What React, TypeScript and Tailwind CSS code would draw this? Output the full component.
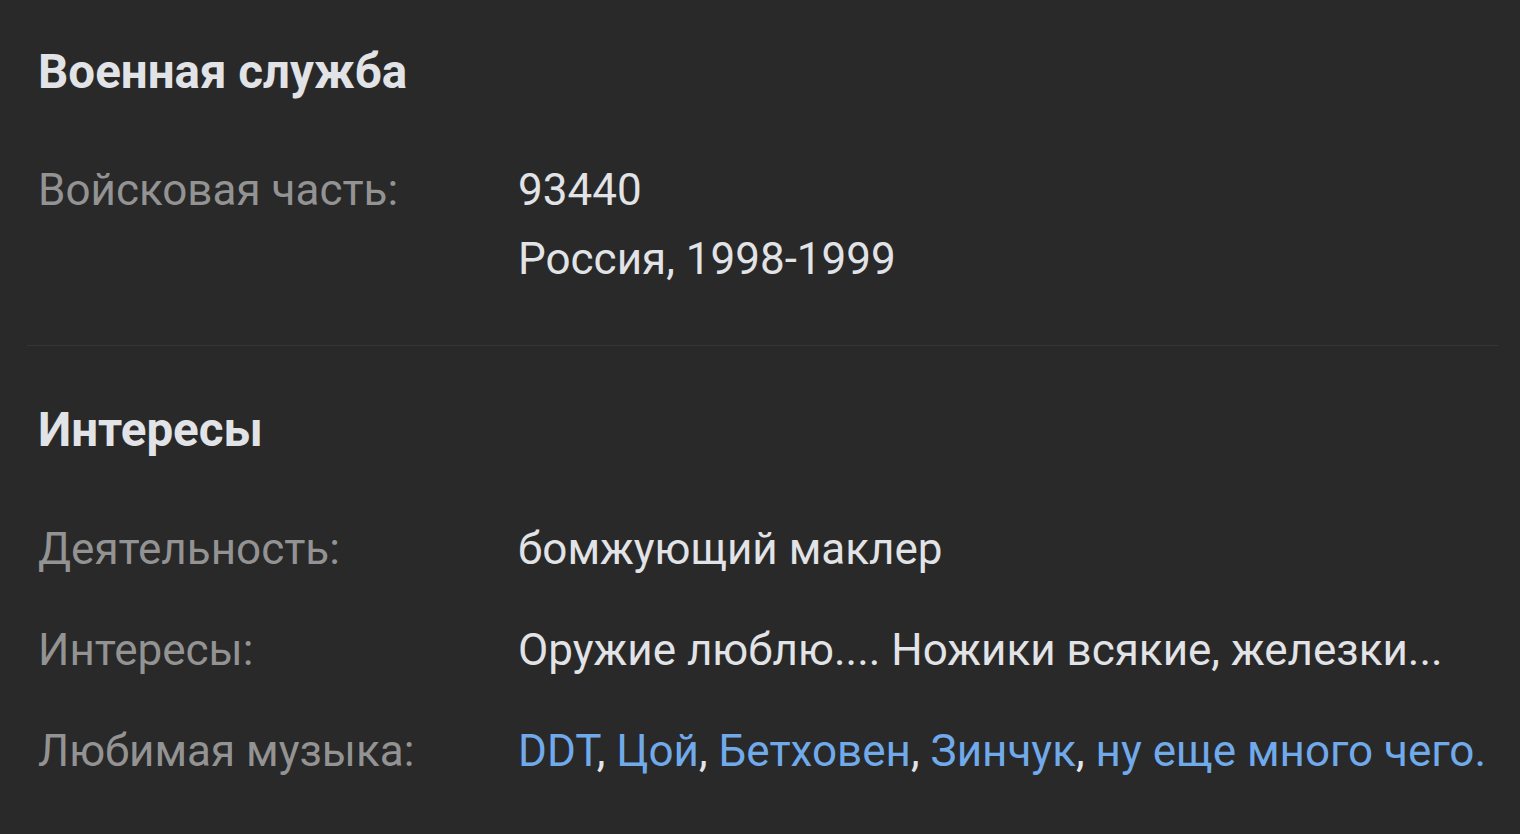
function Row({ label, children }: { label: string; children: React.ReactNode }) {
  return (
    <div className="flex">
      <div className="w-[480px] shrink-0 text-[#939393]">{label}</div>
      <div className="flex-1 whitespace-nowrap text-[#e1e3e6]">{children}</div>
    </div>
  );
}

function Link({ children }: { children: React.ReactNode }) {
  return <a className="text-[#71aaeb]">{children}</a>;
}

export default function App() {
  return (
    <div
      className="min-h-screen w-full bg-[#292929] pl-[27px] pr-[22px] pt-[44px] text-[44px] leading-[69px]"
      style={{ fontFamily: "Roboto, 'Noto Sans', sans-serif" }}
    >
      <section className="px-[11px] pb-[51px]">
        <h2 className="text-[47.5px] leading-[56px] font-bold text-[#e1e3e6]">Военная служба</h2>
        <div className="mt-[56px]">
          <Row label="Войсковая часть:">
            <div>93440</div>
            <div>Россия, 1998-1999</div>
          </Row>
        </div>
      </section>
      <div className="h-px bg-[#363636]" />
      <section className="px-[11px] pt-[56px]">
        <h2 className="text-[47.5px] leading-[56px] font-bold text-[#e1e3e6]">Интересы</h2>
        <div className="mt-[57px] flex flex-col gap-[32px]">
          <Row label="Деятельность:">бомжующий маклер</Row>
          <Row label="Интересы:">Оружие люблю.... Ножики всякие, железки...</Row>
          <Row label="Любимая музыка:">
            <Link>DDT</Link>, <Link>Цой</Link>, <Link>Бетховен</Link>, <Link>Зинчук</Link>,{" "}
            <Link>ну еще много чего.</Link>
          </Row>
        </div>
      </section>
    </div>
  );
}
